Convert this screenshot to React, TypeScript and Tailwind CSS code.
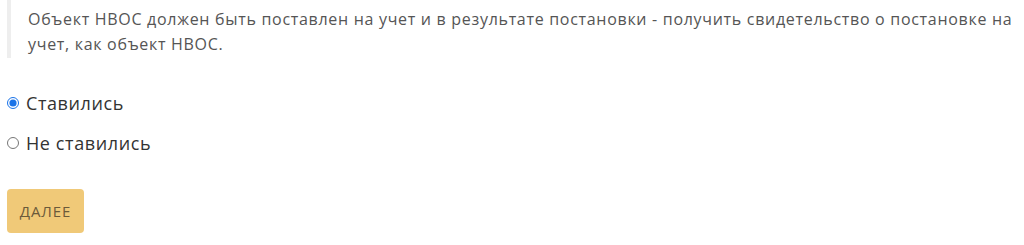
export default function App() {
  return (
    <div
      className="bg-white w-[1024px] h-[245px] overflow-hidden px-[7px] text-[#555]"
      style={{ fontFamily: '"Open Sans", "DejaVu Sans", sans-serif' }}
    >
      <blockquote className="border-l-4 border-[#eeeeee] pl-[17px] pt-[7px] pb-[1px] text-[16px] leading-[25px] tracking-[0.7px]">
        Объект НВОС должен быть поставлен на учет и в результате постановки - получить свидетельство о постановке на
        <br />
        учет, как объект НВОС.
      </blockquote>

      <div className="mt-[32px] flex flex-col gap-[14px] text-[18px] tracking-[0.6px] text-[#333]">
        <label className="flex items-center gap-[7px] h-[26px]">
          <input type="radio" name="q" defaultChecked className="w-[12px] h-[12px] m-0 accent-[#1a73e8]" />
          <span>Ставились</span>
        </label>
        <label className="flex items-center gap-[7px] h-[26px]">
          <input type="radio" name="q" className="w-[12px] h-[12px] m-0" />
          <span>Не ставились</span>
        </label>
      </div>

      <button className="mt-[33px] w-[77px] h-[44px] rounded-[4px] bg-[#f0c978] text-[#6b5a3a] text-[15px] tracking-[0.9px]">
        ДАЛЕЕ
      </button>
    </div>
  );
}
